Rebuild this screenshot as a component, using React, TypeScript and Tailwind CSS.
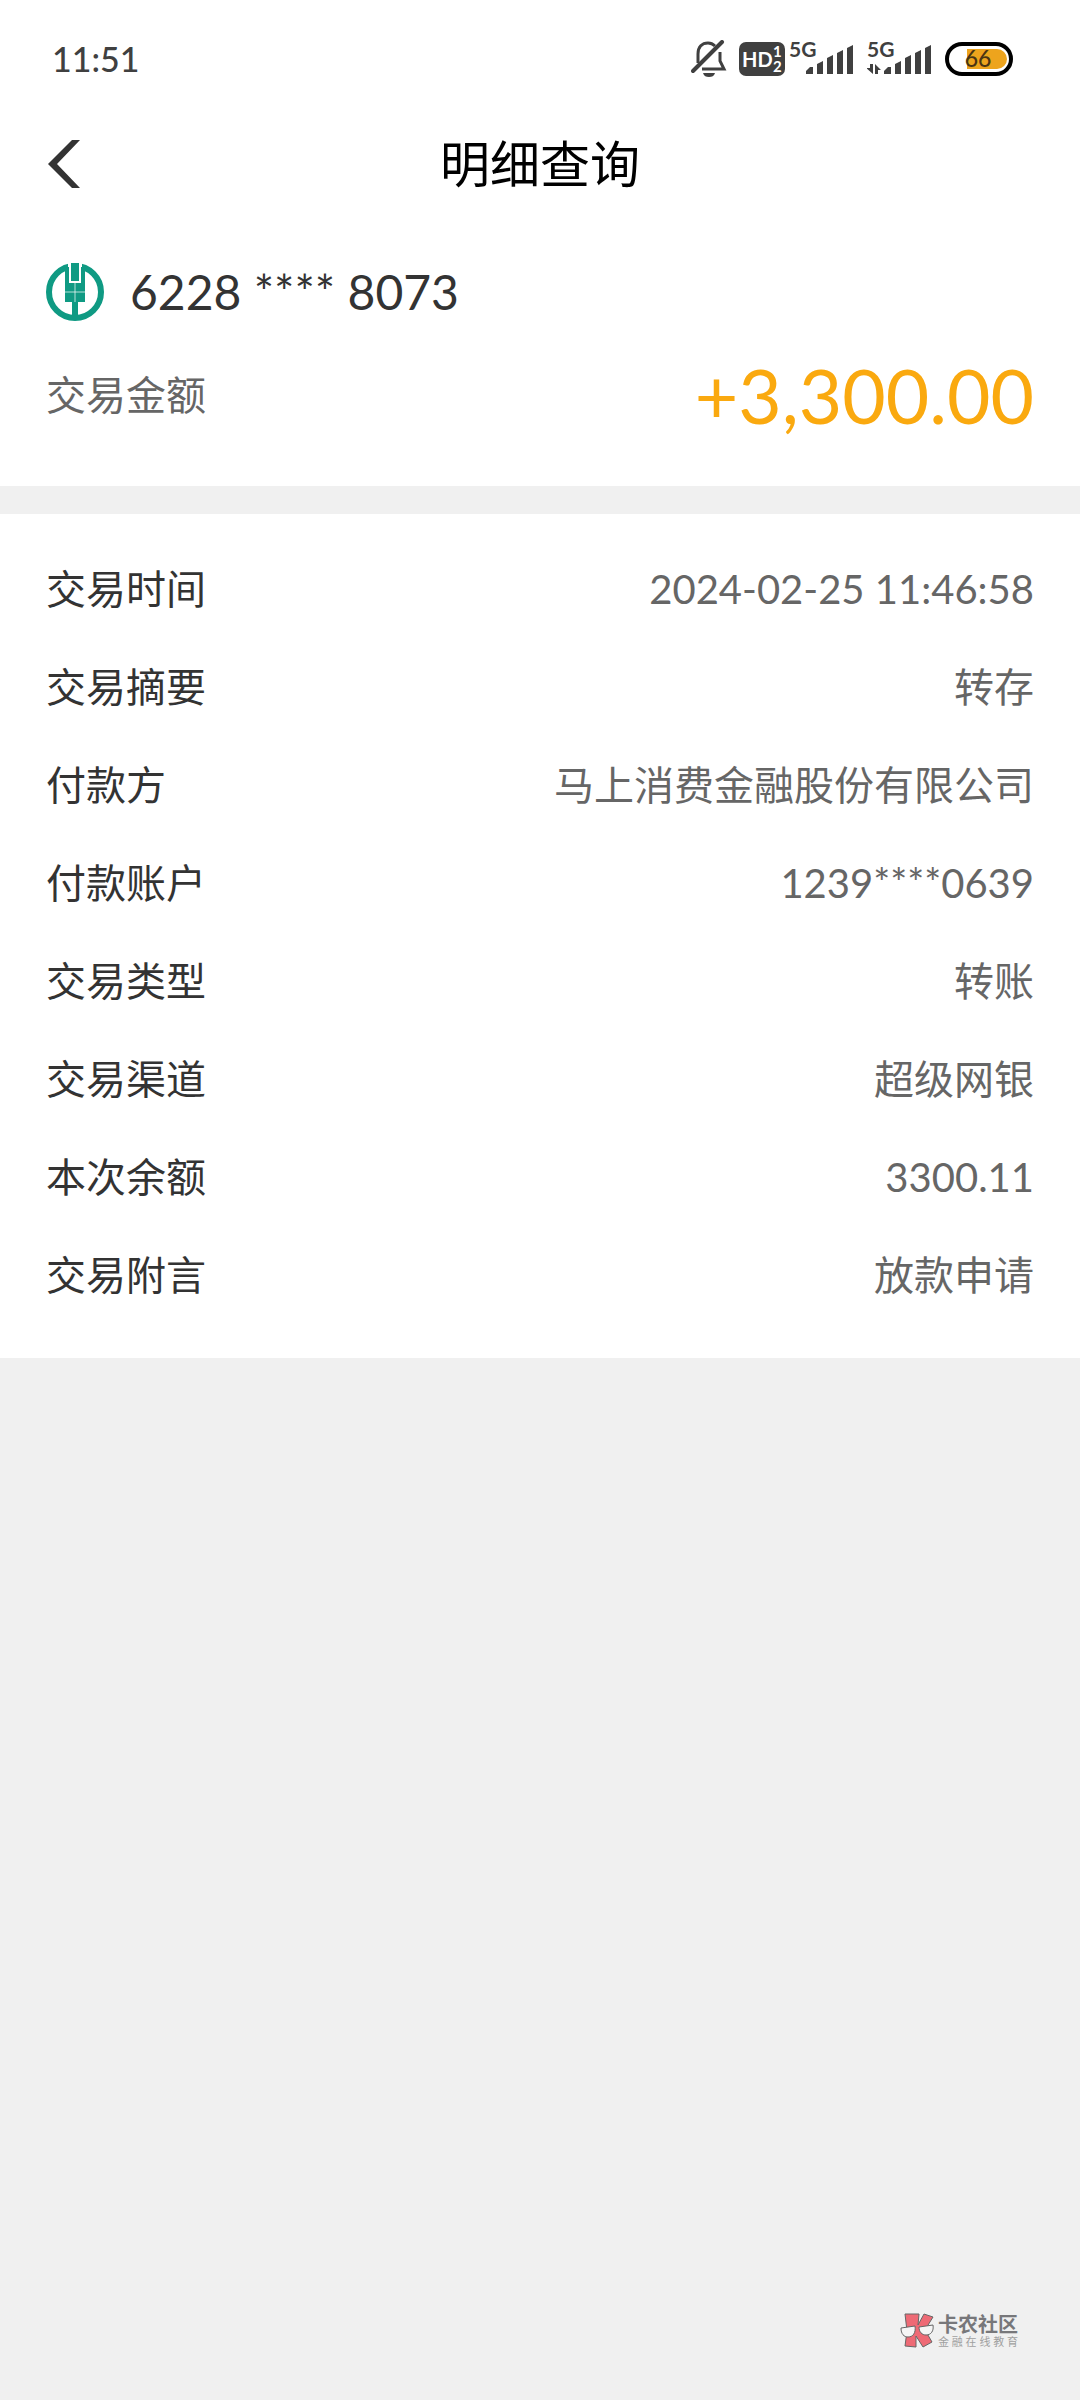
const details = [
  { label: '交易时间', value: '2024-02-25 11:46:58' },
  { label: '交易摘要', value: '转存' },
  { label: '付款方', value: '马上消费金融股份有限公司' },
  { label: '付款账户', value: '1239****0639' },
  { label: '交易类型', value: '转账' },
  { label: '交易渠道', value: '超级网银' },
  { label: '本次余额', value: '3300.11' },
  { label: '交易附言', value: '放款申请' },
]

export default function App() {
  return (
    <div className="min-h-screen flex flex-col bg-[#f0f0f0] font-['Lato','Noto_Sans_CJK_SC',sans-serif] text-[#333333]">
      <header className="bg-white">
        <StatusBar />
        <div className="grid grid-cols-[1fr_auto_1fr] items-center h-[92px] px-12">
          <button type="button" aria-label="返回" className="justify-self-start">
            <svg width="32" height="48" viewBox="0 0 32 48" fill="#333333">
              <path d="M24 0H32L9 24L32 48H24L0 24Z" />
            </svg>
          </button>
          <h1 className="text-[50px] leading-[60px] text-black">明细查询</h1>
        </div>
      </header>

      <section className="bg-white px-[46px] pt-[46px] pb-9">
        <div className="flex items-center gap-[26px] h-[72px]">
          <BankLogo />
          <span className="text-[48px] leading-[56px]">6228 **** 8073</span>
        </div>
        <div className="flex items-center justify-between h-[110px] mt-3">
          <span className="text-[40px] leading-[48px] text-[#666666]">交易金额</span>
          <span className="text-[75px] leading-[80px] text-[#faa90f]">+3,300.00</span>
        </div>
      </section>

      <section className="bg-white mt-7 px-[46px] pt-[26px] pb-[34px]">
        <dl>
          {details.map((item) => (
            <div key={item.label} className="flex items-center justify-between h-[98px] text-[40px] leading-[48px]">
              <dt>{item.label}</dt>
              <dd className="text-[#666666]">{item.value}</dd>
            </div>
          ))}
        </dl>
      </section>

      <footer className="flex items-center justify-end gap-1 mt-auto pr-[62px] pb-[51px]">
        <WatermarkLogo />
        <div className="text-[#77777a]">
          <p className="text-[20px] leading-[22px] font-bold">卡农社区</p>
          <p className="flex justify-between text-[11px] leading-[14px] text-[#a0a0a0]">
            {[...'金融在线教育'].map((char) => (
              <span key={char}>{char}</span>
            ))}
          </p>
        </div>
      </footer>
    </div>
  )
}

function StatusBar() {
  return (
    <div className="flex items-center justify-between h-[118px] pl-[52px] pr-[67px] text-[#404040]">
      <span className="text-[34px] leading-[44px] font-medium">11:51</span>
      <div className="flex items-center">
        <svg className="mr-3" width="36" height="38" viewBox="0 0 36 38" fill="none" stroke="#404040" strokeWidth="3">
          <path d="M7 23V14C7 7 11 3 17 3C20 3 22 4 24 6" />
          <path d="M29 12V21L33 29H11" />
          <path d="M2 31L31 2" strokeWidth="4" strokeLinecap="round" />
          <path d="M12 33H24C23 36 21 37 18 37S13 36 12 33Z" fill="#404040" stroke="none" />
        </svg>
        <svg className="mr-1" width="46" height="34" viewBox="0 0 46 34">
          <rect width="46" height="34" rx="7" fill="#404040" />
          <g fill="#ffffff" fontWeight="700">
            <text x="3" y="25" fontSize="20">HD</text>
            <text x="34" y="15" fontSize="15">1</text>
            <text x="34" y="30" fontSize="15">2</text>
          </g>
        </svg>
        <div className="flex gap-3">
          <Signal />
          <Signal arrows />
        </div>
        <svg className="ml-3" width="68" height="34" viewBox="0 0 68 34">
          <rect x="2" y="2" width="64" height="30" rx="15" fill="#ffffff" stroke="#000000" strokeWidth="4" />
          <path d="M22 7H52A10 10 0 0 1 52 27H22Z" fill="#eda41d" />
          <text x="33" y="25" fontSize="23" fontWeight="500" textAnchor="middle" fill="#4a3413">66</text>
        </svg>
      </div>
    </div>
  )
}

function Signal({ arrows = false }: { arrows?: boolean }) {
  return (
    <svg width="66" height="50" viewBox="0 -8 66 50" fill="#404040">
      <text x="0" y="15" fontSize="21" fontWeight="700">5G</text>
      {arrows && <path d="M3 22H6V32L-1 26H3ZM8 32V22L14 28H11V32Z" />}
      <path d="M17 32V29L21 25H24V32ZM28 32V22L34 19V32ZM38 32V16L44 13V32ZM48 32V11L54 8V32ZM58 32V6L64 3V32Z" />
    </svg>
  )
}

function BankLogo() {
  return (
    <svg width="58" height="58" viewBox="0 0 58 58" fill="none">
      <circle cx="29" cy="29" r="26" stroke="#0f9a83" strokeWidth="6" />
      <path d="M22 0H36V12H22Z" fill="#ffffff" />
      <path d="M25 0H33V18H25Z" fill="#0f9a83" />
      <path d="M19 4H23V20H35V4H39V39H32V56H26V39H19Z" fill="#0f9a83" />
      <path d="M19 29H39M29 20V39" stroke="#ffffff" strokeOpacity="0.7" strokeWidth="1" />
    </svg>
  )
}

function WatermarkLogo() {
  return (
    <svg width="34" height="36" viewBox="0 0 34 36" stroke="#666666" strokeWidth="1">
      <path d="M5 1H19L18 12L24 1L33 4L25 17L32 29L23 34L16 23V34L5 33L7 18Z" fill="#ee6a75" />
      <path d="M1 15L15 13C16 20 13 24 8 24C4 24 1 21 1 15Z" fill="#f5f5f5" />
      <path d="M19 14L33 12C34 18 31 22 26 22C22 22 19 19 19 14Z" fill="#f5f5f5" />
    </svg>
  )
}
